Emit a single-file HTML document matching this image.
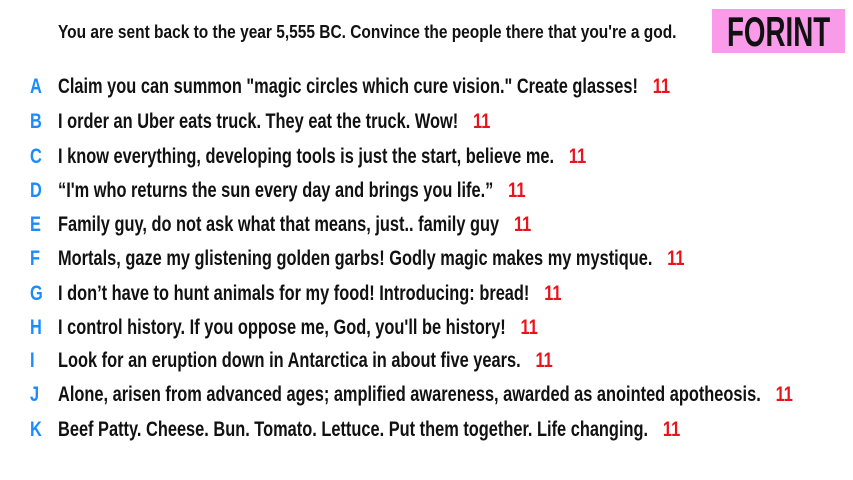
<!DOCTYPE html>
<html><head><meta charset="utf-8"><style>
body{margin:0;width:853px;height:480px;background:#fff;position:relative;overflow:hidden;font-family:"Liberation Sans",sans-serif;font-weight:bold;color:#111}
.t{position:absolute;left:58px;top:22px;font-size:18px;white-space:nowrap;transform:scaleX(0.86);transform-origin:0 0}
.f{position:absolute;left:712px;top:9px;width:133px;height:44px;background:#f99be9}
.f div{position:absolute;left:15px;top:0;font-size:42px;line-height:46px;transform:scaleX(0.66);transform-origin:0 0;color:#111}
.r{position:absolute;left:0;font-size:21px;white-space:nowrap;height:26px;line-height:26px}
.r b{position:absolute;left:30px;color:#1a8cff;transform:scaleX(0.78);transform-origin:0 0}
.r span{position:absolute;left:58px;transform:scaleX(0.78);transform-origin:0 0}
.r i{font-style:normal;color:#e8141c;margin-left:19px}
</style></head><body>
<div class="t">You are sent back to the year 5,555 BC. Convince the people there that you're a god.</div>
<div class="f"><div>FORINT</div></div>
<div class="r" style="top:74px"><b>A</b><span>Claim you can summon "magic circles which cure vision." Create glasses!<i>11</i></span></div>
<div class="r" style="top:109px"><b>B</b><span>I order an Uber eats truck. They eat the truck. Wow!<i>11</i></span></div>
<div class="r" style="top:144px"><b>C</b><span>I know everything, developing tools is just the start, believe me.<i>11</i></span></div>
<div class="r" style="top:178px"><b>D</b><span>“I'm who returns the sun every day and brings you life.”<i>11</i></span></div>
<div class="r" style="top:212px"><b>E</b><span>Family guy, do not ask what that means, just.. family guy<i>11</i></span></div>
<div class="r" style="top:246px"><b>F</b><span>Mortals, gaze my glistening golden garbs! Godly magic makes my mystique.<i>11</i></span></div>
<div class="r" style="top:281px"><b>G</b><span>I don’t have to hunt animals for my food! Introducing: bread!<i>11</i></span></div>
<div class="r" style="top:315px"><b>H</b><span>I control history. If you oppose me, God, you'll be history!<i>11</i></span></div>
<div class="r" style="top:348px"><b>I</b><span>Look for an eruption down in Antarctica in about five years.<i>11</i></span></div>
<div class="r" style="top:382px"><b>J</b><span>Alone, arisen from advanced ages; amplified awareness, awarded as anointed apotheosis.<i>11</i></span></div>
<div class="r" style="top:417px"><b>K</b><span>Beef Patty. Cheese. Bun. Tomato. Lettuce. Put them together. Life changing.<i>11</i></span></div>
</body></html>
